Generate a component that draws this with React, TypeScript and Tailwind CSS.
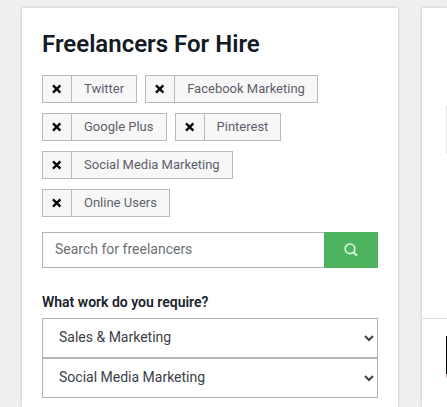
import { useState } from "react";

const INITIAL_SKILLS = [
  "Twitter",
  "Facebook Marketing",
  "Google Plus",
  "Pinterest",
  "Social Media Marketing",
  "Online Users",
];

const CATEGORIES = ["Sales & Marketing", "Design", "Writing & Content"];
const SUBCATEGORIES = ["Social Media Marketing", "Email Marketing", "SEO"];

interface SkillTagProps {
  label: string;
  onRemove: () => void;
}

function SkillTag({ label, onRemove }: SkillTagProps) {
  return (
    <li className="flex h-7 border border-[#b9babc] bg-[#f7f7f8]">
      <button
        type="button"
        aria-label={`Remove ${label}`}
        onClick={onRemove}
        className="flex w-[29px] items-center justify-center border-r border-[#b9babc]"
      >
        <svg width="10" height="10" viewBox="0 0 10 10" aria-hidden="true">
          <path d="M1 1.3l7.4 7.4M8.4 1.3L1 8.7" stroke="#0a0a0a" strokeWidth="2.4" />
        </svg>
      </button>
      <span className="px-3 text-[13px] leading-[26px] text-[#5e616b]">
        {label}
      </span>
    </li>
  );
}

export default function App() {
  const [skills, setSkills] = useState(INITIAL_SKILLS);
  const [query, setQuery] = useState("");

  const removeSkill = (skill: string) => {
    setSkills((prev) => prev.filter((s) => s !== skill));
  };

  return (
    <div className="flex min-h-screen gap-6 overflow-hidden bg-[#efefef] pt-2 pl-[22px] font-[Roboto,sans-serif]">
      <main className="min-w-0 flex-1 bg-white px-5 pt-5 pb-2 shadow-[0_0_3px_rgba(0,0,0,0.2)]">
        <h1 className="text-[24px] leading-8 font-semibold text-[#121a24]">
          Freelancers For Hire
        </h1>

        <ul className="mt-[15px] flex flex-wrap gap-x-2 gap-y-[10px] pr-4">
          {skills.map((skill) => (
            <SkillTag
              key={skill}
              label={skill}
              onRemove={() => removeSkill(skill)}
            />
          ))}
        </ul>

        {/* SEARCH */}
        <form className="mt-[15px] flex h-9" onSubmit={(e) => e.preventDefault()}>
          <input
            type="text"
            aria-label="Search for freelancers"
            placeholder="Search for freelancers"
            value={query}
            onChange={(e) => setQuery(e.target.value)}
            className="min-w-0 flex-1 border border-r-0 border-[#b3b3b3] bg-white px-3 pb-[2px] text-[14px] text-[#3c4148] outline-none placeholder:text-[#6b6f76]"
          />
          <button
            type="submit"
            aria-label="Search"
            className="flex w-[54px] items-center justify-center bg-[#4db35e]"
          >
            <svg
              width="14"
              height="14"
              viewBox="0 0 14 14"
              fill="none"
              stroke="#dcf5df"
              aria-hidden="true"
            >
              <circle cx="6" cy="5.8" r="4.8" strokeWidth="1.7" />
              <path d="M9.4 9.2L13 12.8" strokeWidth="2.2" />
            </svg>
          </button>
        </form>

        {/* WORK TYPE */}
        <label
          htmlFor="category"
          className="mt-6 block text-[14px] leading-5 font-semibold text-[#1a222b]"
        >
          What work do you require?
        </label>
        <div className="mt-[6px] flex flex-col">
          <select
            id="category"
            className="h-10 w-full border border-[#b3b3b3] bg-white pb-[2px] pl-3 text-[14px] text-[#3c4148]"
          >
            {CATEGORIES.map((c) => (
              <option key={c}>{c}</option>
            ))}
          </select>
          <select
            aria-label="Subcategory"
            className="h-10 w-full border border-[#b3b3b3] bg-white pb-[2px] pl-3 text-[14px] text-[#3c4148]"
          >
            {SUBCATEGORIES.map((c) => (
              <option key={c}>{c}</option>
            ))}
          </select>
        </div>
      </main>

      {/* RESULTS */}
      <aside className="flex w-[25px] shrink-0 flex-col items-end bg-white shadow-[0_0_3px_rgba(0,0,0,0.2)]">
        <div className="mt-[97px] h-12 w-px bg-[#e6e6e6]" />
        <div className="mt-[165px] w-full border-t border-[#e2e2e2]" />
        <div className="mt-[17px] h-[38px] w-px bg-black" />
        <div className="h-1 w-px bg-[#d9a3b5]" />
      </aside>
    </div>
  );
}
